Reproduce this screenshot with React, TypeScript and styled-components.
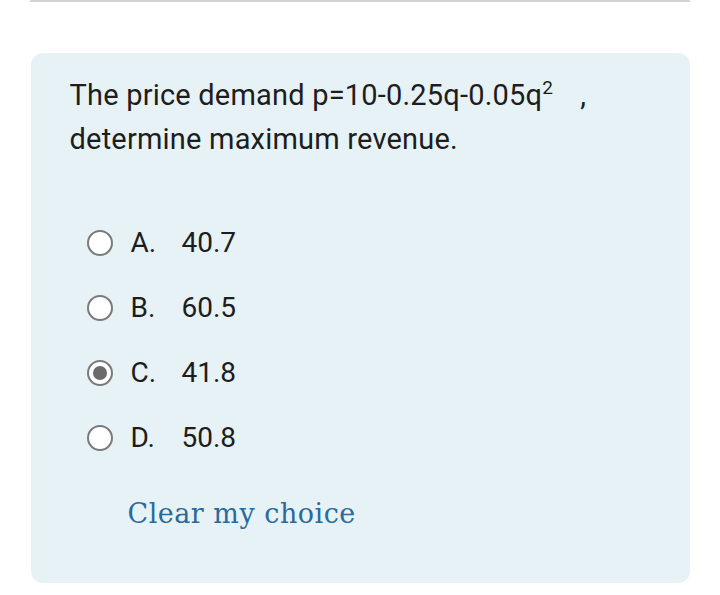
import React, { useState } from "react";
import styled, { createGlobalStyle } from "styled-components";

const GlobalStyle = createGlobalStyle`
  html, body {
    margin: 0;
    padding: 0;
    background: #ffffff;
  }
  body {
    font-family: Roboto, "Liberation Sans", sans-serif;
  }
`;

const options = [
  { key: "A", value: "40.7" },
  { key: "B", value: "60.5" },
  { key: "C", value: "41.8" },
  { key: "D", value: "50.8" },
];

const App: React.FC = () => {
  const [selected, setSelected] = useState<string | null>("C");

  return (
    <>
      <GlobalStyle />
      <Page>
        <TopRule />
        <QuestionCard>
          <QuestionText>
            The price demand p=10-0.25q-0.05q<sup>2</sup>
            <Comma>,</Comma>
            <br />
            determine maximum revenue.
          </QuestionText>
          <Answers>
            {options.map(({ key, value }) => (
              <AnswerRow key={key} onClick={() => setSelected(key)}>
                <Radio $checked={selected === key} />
                <Letter>{key}.</Letter>
                <Value>{value}</Value>
              </AnswerRow>
            ))}
          </Answers>
          <ClearLink onClick={() => setSelected(null)}>Clear my choice</ClearLink>
        </QuestionCard>
      </Page>
    </>
  );
};

const Page = styled.div`
  width: 720px;
  height: 595px;
  display: flex;
  flex-direction: column;
  align-items: center;
  box-sizing: border-box;
  overflow: hidden;
`;

const TopRule = styled.div`
  width: 660px;
  height: 2px;
  background: #d2d2d2;
  margin-bottom: 51px;
`;

const QuestionCard = styled.div`
  width: 659px;
  height: 530px;
  box-sizing: border-box;
  background: #e7f2f6;
  border-radius: 12px;
  padding: 20px 40px 0 39px;
  display: flex;
  flex-direction: column;
`;

const QuestionText = styled.p`
  margin: 0;
  font-size: 29px;
  letter-spacing: 0.2px;
  line-height: 44px;
  color: #1d1d1d;

  sup {
    font-size: 19px;
    line-height: 0;
    vertical-align: 11px;
  }
`;

const Comma = styled.span`
  margin-left: 27px;
`;

const Answers = styled.div`
  display: flex;
  flex-direction: column;
  margin-top: 49px;
  padding-left: 17px;
`;

const AnswerRow = styled.div`
  display: flex;
  align-items: center;
  height: 65px;
  cursor: pointer;
`;

const Radio = styled.span<{ $checked: boolean }>`
  width: 26px;
  height: 26px;
  box-sizing: border-box;
  border-radius: 50%;
  border: 2px solid #7a7a7a;
  background: #ffffff;
  display: flex;
  align-items: center;
  justify-content: center;
  flex-shrink: 0;

  &::after {
    content: "";
    display: ${({ $checked }) => ($checked ? "block" : "none")};
    width: 14px;
    height: 14px;
    border-radius: 50%;
    background: #6b6b6b;
  }
`;

const Letter = styled.span`
  font-size: 28px;
  color: #1d1d1d;
  margin-left: 18px;
  width: 51px;
`;

const Value = styled.span`
  font-size: 28px;
  color: #1d1d1d;
`;

const ClearLink = styled.a`
  margin-top: 28px;
  margin-left: 58px;
  font-family: "DejaVu Serif", "Liberation Serif", serif;
  font-size: 27px;
  letter-spacing: 0.5px;
  color: #2a6a9e;
  cursor: pointer;
  align-self: flex-start;
`;

export default App;
